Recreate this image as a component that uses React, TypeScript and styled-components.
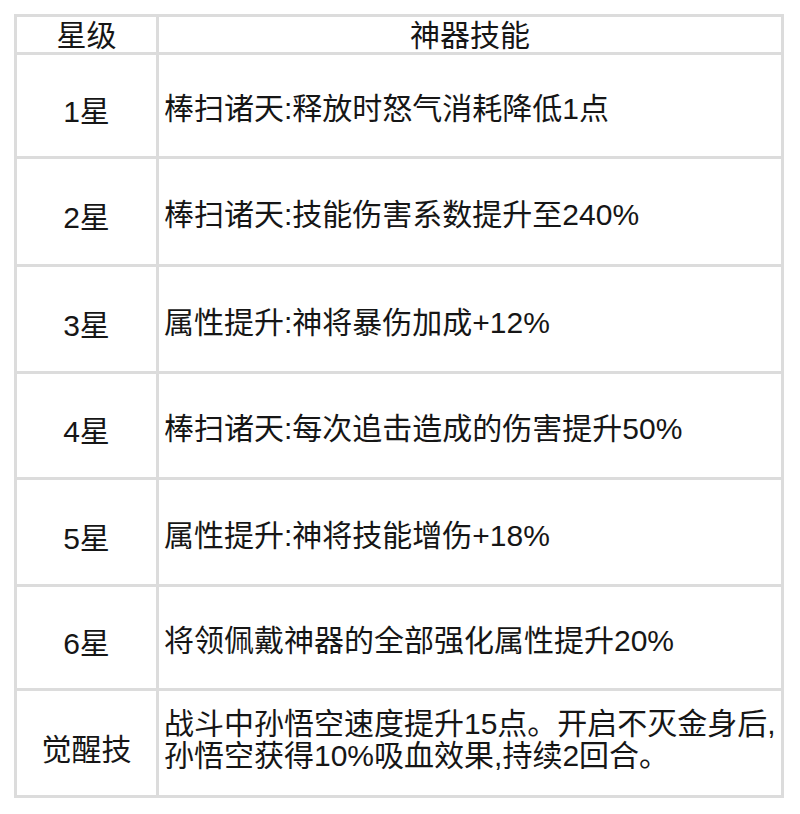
import styled, { createGlobalStyle } from 'styled-components';

const GlobalStyle = createGlobalStyle`
  body {
    margin: 0;
    background: #ffffff;
    font-family: "Liberation Sans", "Noto Sans CJK SC", sans-serif;
    color: #161616;
  }
`;

const Page = styled.div`
  padding: 14px 0 0 14px;
`;

const Table = styled.table`
  border-collapse: collapse;
  width: 770px;
  table-layout: fixed;
  font-size: 30px;
`;

const HeadCell = styled.th<{ wide?: boolean }>`
  border: 3px solid #dcdcdc;
  height: 32px;
  padding: 3px 0 0;
  font-weight: normal;
  text-align: center;
  line-height: 32px;
  width: ${(props) => (props.wide ? 'auto' : '139px')};
`;

const StarCell = styled.td<{ h: number }>`
  border: 3px solid #dcdcdc;
  height: ${(props) => props.h - 10}px;
  padding: 7px 0 0;
  text-align: center;
  vertical-align: middle;
`;

const SkillCell = styled.td<{ multi?: boolean }>`
  border: 3px solid #dcdcdc;
  padding: ${(props) => (props.multi ? '0 0 6px 5px' : '7px 0 0 5px')};
  vertical-align: middle;
  white-space: nowrap;
  line-height: 32px;
`;

type Row = { star: string; skill: string[]; h: number };

const rows: Row[] = [
  { star: '1星', skill: ['棒扫诸天:释放时怒气消耗降低1点'], h: 104 },
  { star: '2星', skill: ['棒扫诸天:技能伤害系数提升至240%'], h: 108 },
  { star: '3星', skill: ['属性提升:神将暴伤加成+12%'], h: 107 },
  { star: '4星', skill: ['棒扫诸天:每次追击造成的伤害提升50%'], h: 106 },
  { star: '5星', skill: ['属性提升:神将技能增伤+18%'], h: 107 },
  { star: '6星', skill: ['将领佩戴神器的全部强化属性提升20%'], h: 104 },
  {
    star: '觉醒技',
    skill: ['战斗中孙悟空速度提升15点。开启不灭金身后,', '孙悟空获得10%吸血效果,持续2回合。'],
    h: 107,
  },
];

export default function App() {
  return (
    <Page>
      <GlobalStyle />
      <Table>
        <thead>
          <tr>
            <HeadCell>星级</HeadCell>
            <HeadCell wide>神器技能</HeadCell>
          </tr>
        </thead>
        <tbody>
          {rows.map((row) => (
            <tr key={row.star}>
              <StarCell h={row.h}>{row.star}</StarCell>
              <SkillCell multi={row.skill.length > 1}>
                {row.skill.map((line) => (
                  <div key={line}>{line}</div>
                ))}
              </SkillCell>
            </tr>
          ))}
        </tbody>
      </Table>
    </Page>
  );
}
